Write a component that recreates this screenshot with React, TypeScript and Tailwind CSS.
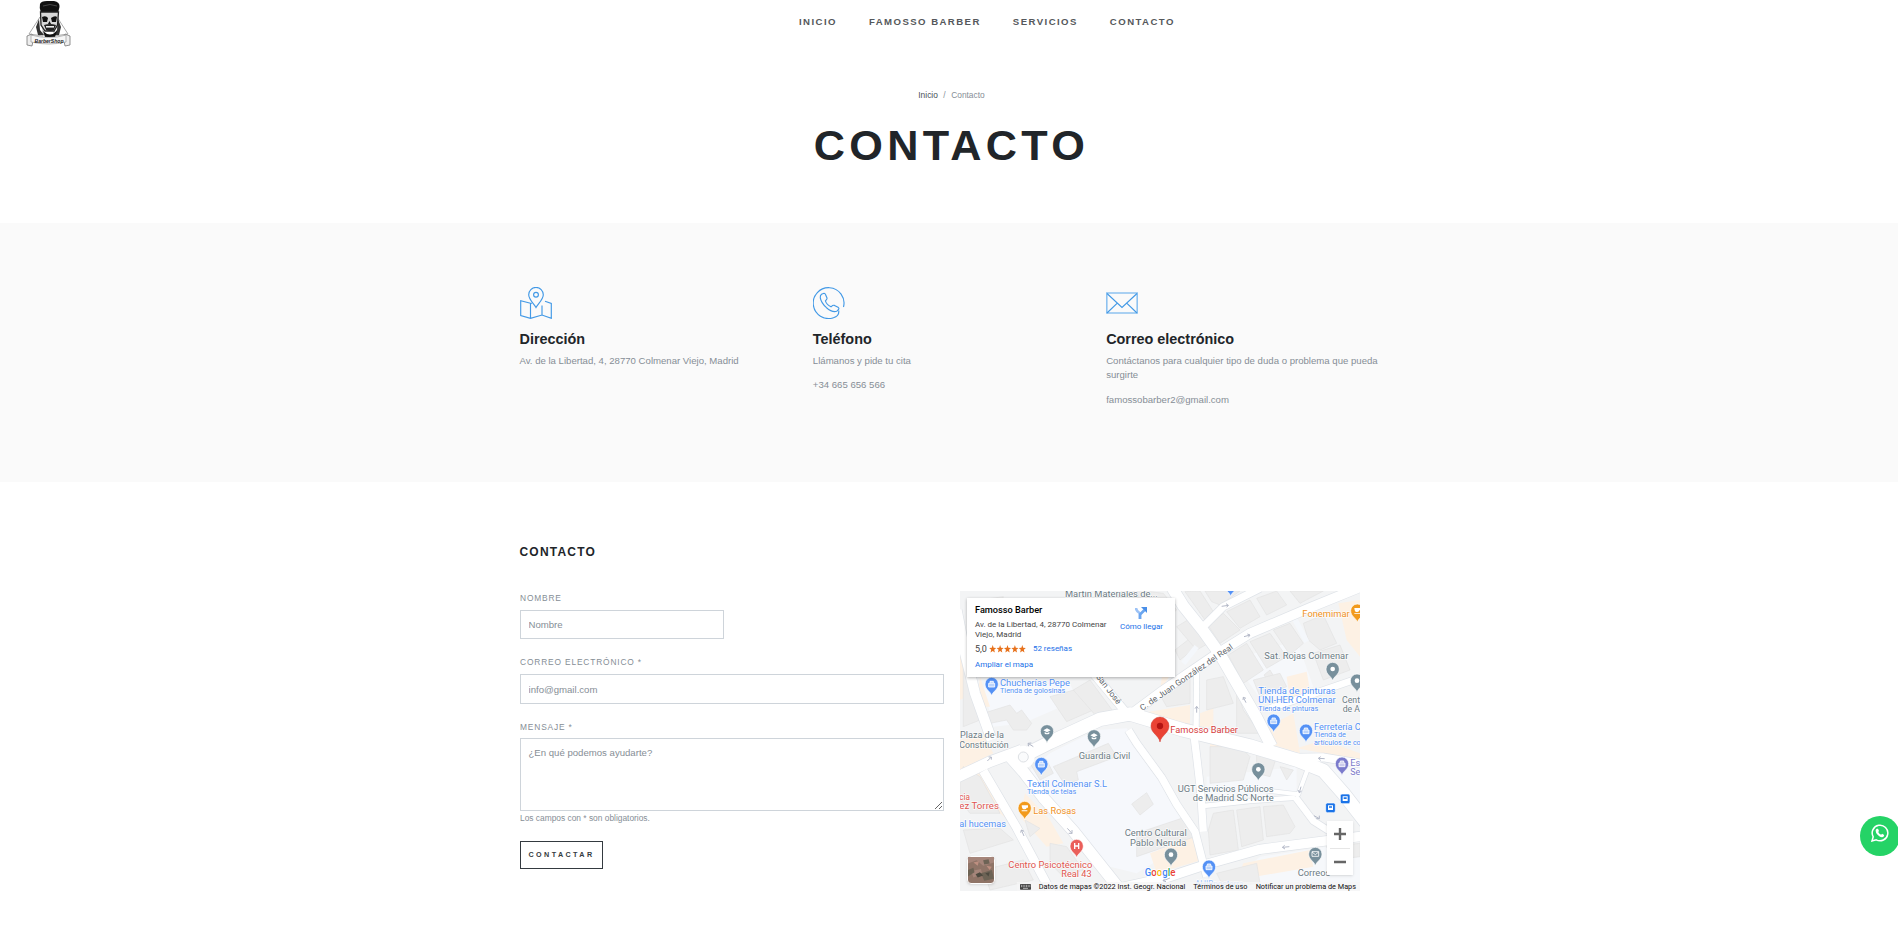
import React from 'react';

const navItems = ['INICIO', 'FAMOSSO BARBER', 'SERVICIOS', 'CONTACTO'];

function Logo() {
  return (
    <svg width="46" height="47" viewBox="0 0 46 47" aria-hidden="true">
      <path d="M3 34 14 17 17 22 17 36ZM42 34 31 17 28 22 28 36Z" fill="#fff" stroke="#aaa" strokeWidth="1" />
      <path d="M13 19 10 27 12 35H33L35 27 32 19 31 30 27 35H18L14 30Z" fill="#333" />
      <path d="M14 4Q15 1 21 1H28Q34 2 33.500 7L32 13H15Q13 8 14 4Z" fill="#111" />
      <path d="M17 6Q24 3 31 6" stroke="#555" strokeWidth=".8" fill="none" />
      <path d="M14.500 12H32.500L31.500 25 28 31H19L15 25Z" fill="#d8d8d8" stroke="#222" strokeWidth="1.3" />
      <path d="M16 17Q20 15 22 18L21 22H17ZM25 18Q29 15 31 17L30 22H26ZM23.5 21 25 24H22Z" fill="#111" />
      <path d="M18 25Q24 23 30 25L28 30Q24 32 20 30Z" fill="#222" />
      <path d="M20 26.8H28" stroke="#eee" strokeWidth="1.6" />
      <path d="M17 31Q24 38 31 31L29 37H19Z" fill="#111" />
      <path d="M1 36 6 34 7 41 6 46 1 45ZM44 36 39 34 38 41 39 46 44 45Z" fill="#eee" stroke="#777" strokeWidth=".8" />
      <path d="M5 35Q23 40 40 35V42Q23 46 5 42Z" fill="#f6f6f6" stroke="#999" strokeWidth=".7" />
      <text x="23" y="42.5" textAnchor="middle" fontSize="6" fontStyle="italic" fontWeight="700" fill="#222" textLength="29" lengthAdjust="spacingAndGlyphs" fontFamily="Liberation Sans, sans-serif">BarberShop</text>
    </svg>
  );
}

const iconProps = { width: 32, height: 32, viewBox: '0 0 32 32', fill: 'none', stroke: '#4299e6', strokeWidth: 1.15 } as const;

function MapIcon() {
  return (
    <svg {...iconProps}>
      <path d="M16 20.5C14 17 8.7 12.3 8.7 7.7A7.3 7.3 0 0 1 23.3 7.7C23.3 12.3 18 17 16 20.5Z" />
      <circle cx="16" cy="7.7" r="2.4" />
      <path d="M12 16.200 10.5 16.2.7 13.8V28.5L10.5 31.3 22 28 31.3 31.3V16.5L25 14.3M10.5 16.2V31.3M22 18.5V28" />
    </svg>
  );
}

function PhoneIcon() {
  return (
    <svg {...iconProps}>
      <path d="M30.5 20A15.4 15.4 0 1 0 20.5 30.7Q26.5 29 25.7 23.5" />
      <path d="M8.5 7.2 11 6.3Q12 6.2 12.5 7.5L14 11Q14.3 12 13.3 12.8L12.4 13.8Q13.5 17.5 18 19.8L19.5 18.6Q20.5 18 21.5 18.4L25 20.2Q26.5 21.2 25.5 22.5L23.7 24.3Q19 25.6 13.5 20.7Q8 15.5 7.3 10.8Q7 8.4 8.5 7.2Z" />
    </svg>
  );
}

function MailIcon() {
  return (
    <svg {...iconProps}>
      <path d="M.8 6H31.2V26H.8Z" stroke="#8ec2f0" strokeWidth="1.6" />
      <path d="M1 6.5 16 20.5 31 6.5M1 26 11.3 16.2M31 26 20.7 16.2" />
    </svg>
  );
}

const GREY = '#78909c';
const BLUE = '#5491f5';

type PinProps = { x: number; y: number; c: string; kind?: 'dot' | 'bag' | 'cap' | 'H' | 'cup' | 'mail' };
function Pin({ x, y, c, kind = 'dot' }: PinProps) {
  return (
    <g transform={`translate(${x} ${y})`}>
      <path d="M0 36C-2 22-20 18-20 0A20 20 0 0 1 20 0C20 18 2 22 0 36Z" fill={c} stroke="#fff" strokeWidth="2" />
      {kind === 'dot' && <circle r="7" fill="#fff" />}
      {kind === 'bag' && <path d="M-9-2H9V9H-9ZM-5-3V-8H5V-3" fill="#fff" fillOpacity=".6" stroke="#fff" strokeWidth="2.5" />}
      {kind === 'cap' && <path d="M-11-3 0-9 11-3 0 3ZM-7 2V7Q0 11 7 7V2L0 6Z" fill="#fff" />}
      {kind === 'H' && <path d="M-6-9V9M6-9V9M-6 0H6" stroke="#fff" strokeWidth="4" />}
      {kind === 'cup' && <path d="M-9-8H10V-1H6Q5 4 0 4H-3Q-8 4-9-8ZM-9 7H8V9.500H-9Z" fill="#fff" />}
      {kind === 'mail' && <path d="M-10-7H10V7H-10ZM-10-6 0 2 10-6" fill="none" stroke="#fff" strokeWidth="2.500" />}
    </g>
  );
}

type LabelProps = { x: number; y: number; w: number; c?: string; s?: number; children: string };
function Label({ x, y, w, c = '#6c7b84', s = 27, children }: LabelProps) {
  return (
    <text x={x} y={y} textLength={w} lengthAdjust="spacingAndGlyphs" fontSize={s} fill={c} stroke="#fff" strokeWidth="4" strokeOpacity=".8" paintOrder="stroke">
      {children}
    </text>
  );
}

const roads: [string, number][] = [
  ['M540 405 630 338 800 222 900 160 1080 83 1240 18', 28],
  ['M655 5 700 78 760 153 810 223 920 413 965 500', 34],
  ['M760 140 820 80 930 25', 22],
  ['M215 530 300 487 450 418 540 402 700 450 900 498 1040 540 1120 572 1180 640 1250 730', 40],
  ['M370 180 430 280 530 400', 24],
  ['M20 90 45 220 75 340 125 480', 30],
  ['M20 592 120 545 215 510', 32],
  ['M100 573 200 743 305 940', 26],
  ['M180 530 220 575 280 653 370 753 515 935', 34],
  ['M535 450 560 490 635 593 680 673 735 755 770 890', 22],
  ['M730 450 740 530 752 633 760 755', 22],
  ['M480 930 650 893 770 853 930 808 1240 768', 28],
  ['M760 678 900 663 1035 653', 14],
  ['M950 632 1045 643 1072 570', 12],
  ['M1035 650 1090 723 1180 780', 20],
  ['M1030 533 1120 532 1240 552', 24],
  ['M740 270 738 470', 16],
  ['M960 385 1080 345 1240 290', 20],
];

const blocks = [
  'M100 400 180 375 200 400 215 390 245 430 230 450 190 450 170 420 120 430Z', 'M300 350 390 325 430 390 350 425Z', 'M370 330 420 300 490 395 440 410Z',
  'M560 30 640 40 680 90 590 150Z', 'M500 30 550 30 580 80 520 110Z',
  'M675 210 720 175 740 200 690 240Z', 'M680 140 730 110 775 190 740 210Z',
  'M705 35 750 33 790 95 765 120Z', 'M765 33 870 33 810 75 785 65Z',
  'M770 130 820 100 870 150 810 190Z', 'M830 95 900 60 930 110 870 145Z', 'M920 55 980 33 1010 75 950 105Z', 'M1020 33 1120 33 1050 70Z',
  'M835 225 890 190 940 270 880 310Z', 'M900 185 960 160 1010 230 950 265Z', 'M970 150 1020 130 1060 190 1020 225Z', 'M1060 130 1120 105 1160 190 1110 210 1075 180Z', 'M1090 220 1170 195 1200 270 1120 300Z',
  'M942 285 960 270 972 290 955 303Z', 'M630 345 720 290 720 370 650 380Z', 'M770 300 820 290 850 370 770 390Z', 'M860 330 880 390 930 460 860 460Z', 'M910 300 990 280 1010 320 930 350Z',
  'M310 560 475 490 500 530 380 575 385 600 345 615Z', 'M545 672 590 638 610 673 570 705Z',
  'M780 500 870 500 900 530 880 600 780 610Z', 'M920 520 980 530 960 590 920 580Z', 'M990 560 1030 570 1010 600Z',
  'M790 700 850 690 865 810 780 825 775 750Z', 'M860 690 930 680 940 780 875 800Z', 'M940 680 1000 675 1035 740 1020 760 950 770Z',
  'M40 560 90 590 150 700 60 700 30 660V590Z', 'M40 750 150 745 190 780 60 820Z', 'M100 870 220 840 250 900 120 930Z',
  'M240 550 290 540 310 580 270 600Z', 'M560 760 710 710 735 770 560 830Z', 'M225 720 270 745 240 770Z', 'M300 790 350 800 400 870 340 890 300 850Z',
  'M800 880 920 850 930 910 820 920Z', 'M1130 800 1230 790V830L1150 840Z', 'M90 60 160 50 140 110 90 120Z', 'M40 230 60 340 90 420 40 440Z',
];

function MapView() {
  return (
    <svg className="block h-[300px] w-[400px]" viewBox="30 33 1200 900" fontFamily="Roboto, sans-serif">
      <rect x="30" y="33" width="1200" height="900" fill="#f3f4f5" />
      <path d="M300 520 440 450 530 445 635 600 740 770 560 880 480 860 360 735 240 570ZM100 320 360 310 380 360 220 430 130 440Z" fill="#f6f8fc" />
      <path d="M770 590 1040 560 1040 640 770 660ZM930 830 1130 800 1240 820V940H800ZM850 240 1040 180 1090 320 940 370ZM1100 560 1240 560 1240 700Z" fill="#f6f8fb" />
      <path d="M30 120 70 340 30 360ZM90 290 120 380 80 380ZM570 400 720 375 720 440 610 430ZM630 333 670 270 640 260ZM1165 70 1230 60V230L1190 180ZM1010 290 1070 275 1080 330 1020 360ZM955 440 1030 400 1050 520 970 495ZM750 400 790 385 790 440 750 440ZM780 490 860 500 860 560 780 580ZM30 480 100 465 130 520 30 570ZM40 590 90 575 200 743 150 700 80 680ZM225 640 300 720 340 790 290 800 210 710ZM600 820 735 770 755 840 620 880ZM880 850 1080 810 1090 860 860 900ZM1040 505 1120 480 1230 520V540Z" fill="#fdf1e4" />
      <g fill="#ededed" stroke="#e2e2e2" strokeWidth="2">{blocks.map((d) => <path key={d} d={d} />)}</g>
      <path d="M1025 100 1070 185M480 33 560 180 610 260M700 250 740 200" stroke="#f4f7fb" strokeWidth="16" fill="none" />
      <g fill="none" strokeLinejoin="round">
        {roads.map(([d, w]) => <path key={d} d={d} stroke="#dfe3e8" strokeWidth={w + 4} />)}
        {roads.map(([d, w]) => <path key={d} d={d} stroke="#fff" strokeWidth={w} />)}
        <circle cx="220" cy="531" r="34" fill="#fff" />
        <circle cx="220" cy="531" r="15" fill="#fafbfc" stroke="#dde0e4" strokeWidth="3" />
        <path d="M815 79 835 76M828 71 835 76 830 82M882 170 900 165M892 162 900 165 895 172M740 398V380M735 386 740 379 745 386M888 368 880 352M879 360 880 352 888 355M112 543 124 531M116 531H124V539M234 490 250 500M236 499 234 490 244 489M214 750 222 768M212 758 214 750 222 754M352 745 366 760M356 760H366V750M1124 536 1106 535M1112 530 1105 535 1112 541M1053 620 1048 638M1044 630 1048 638 1055 633M1092 707 1108 716M1108 707V716H1099M1018 800 998 802M1004 796 997 802 1005 807M660 894 640 902M646 894 639 902 648 905" stroke="#b4b9c8" strokeWidth="3" />
      </g>

      <Label x={345} y={50} w={278}>Martín Materiales de...</Label>
      <Label x={1057} y={112} w={142} c="#f0921e">Fonemimar</Label>
      <Label x={943} y={236} w={252}>Sat. Rojas Colmenar</Label>
      <Label x={925} y={343} w={232} c={BLUE}>Tienda de pinturas</Label>
      <Label x={925} y={370} w={232} c={BLUE}>UNI-HER Colmenar</Label>
      <Label x={925} y={393} w={180} c={BLUE} s={20}>Tienda de pinturas</Label>
      <Label x={1176} y={370} w={54}>Cent</Label>
      <Label x={1178} y={397} w={52}>de A</Label>
      <Label x={1092} y={449} w={140} c={BLUE}>Ferretería C</Label>
      <Label x={1092} y={472} w={96} c={BLUE} s={20}>Tienda de</Label>
      <Label x={1092} y={495} w={140} c={BLUE} s={20}>artículos de co</Label>
      <Label x={150} y={317} w={210} c={BLUE}>Chucherías Pepe</Label>
      <Label x={150} y={340} w={196} c={BLUE} s={20}>Tienda de golosinas</Label>
      <Label x={30} y={475} w={132}>Plaza de la</Label>
      <Label x={28} y={503} w={148}>Constitución</Label>
      <Label x={386} y={537} w={155}>Guardia Civil</Label>
      <Label x={661} y={459} w={203} c="#d63b3b">Famosso Barber</Label>
      <g transform="translate(577 393) rotate(-34.5)"><Label x={0} y={0} w={332} c="#5f676c" s={25}>C. de Juan González del Real</Label></g>
      <g transform="translate(437 291) rotate(52)"><Label x={0} y={0} w={106} c="#5f676c" s={25}>San José</Label></g>
      <Label x={231} y={620} w={240} c={BLUE}>Textil Colmenar S.L</Label>
      <Label x={231} y={642} w={148} c={BLUE} s={20}>Tienda de telas</Label>
      <Label x={28} y={661} w={32} c="#e0554f">cia</Label>
      <Label x={28} y={688} w={119} c="#e0554f">ez Torres</Label>
      <Label x={28} y={741} w={140} c={BLUE}>al hucemas</Label>
      <Label x={250} y={703} w={128} c="#f0921e">Las Rosas</Label>
      <Label x={683} y={635} w={288}>UGT Servicios Públicos</Label>
      <Label x={728} y={663} w={243}>de Madrid SC Norte</Label>
      <Label x={1201} y={557} w={30} c="#7a79c9">Es</Label>
      <Label x={1201} y={585} w={30} c="#7a79c9">Se</Label>
      <Label x={524} y={769} w={186}>Centro Cultural</Label>
      <Label x={540} y={797} w={169}>Pablo Neruda</Label>
      <Label x={175} y={865} w={252} c="#e0554f">Centro Psicotécnico</Label>
      <Label x={334} y={892} w={91} c="#e0554f">Real 43</Label>
      <Label x={1043} y={888} w={98}>Correos</Label>
      <Label x={735} y={922} w={145} c="#9cc2fa">AHIRposterra</Label>

      <Pin x={125} y={312} c={BLUE} kind="bag" />
      <Pin x={291} y={454} c={GREY} kind="cap" />
      <Pin x={432} y={469} c={GREY} kind="cap" />
      <Pin x={1222} y={92} c="#f29a1c" kind="cup" />
      <Pin x={842} y={14} c={BLUE} kind="bag" />
      <Pin x={1148} y={267} c={GREY} />
      <Pin x={1221} y={302} c={GREY} />
      <Pin x={971} y={422} c={BLUE} kind="bag" />
      <Pin x={1068} y={452} c={BLUE} kind="bag" />
      <Pin x={274} y={552} c={BLUE} kind="bag" />
      <Pin x={224} y={684} c="#f29a1c" kind="cup" />
      <Pin x={380} y={798} c="#ea5f5a" kind="H" />
      <Pin x={663} y={824} c={GREY} />
      <Pin x={777} y={860} c={BLUE} kind="bag" />
      <Pin x={925} y={568} c={GREY} />
      <Pin x={1176} y={551} c="#7b7bcc" kind="bag" />
      <Pin x={1096} y={822} c={GREY} kind="mail" />
      <path d="M630 486C627 466 603 460 603 438A27 27 0 0 1 657 438C657 460 633 466 630 486Z" fill="#ea4335" stroke="#cf3a2e" strokeWidth="1.5" />
      <circle cx="630" cy="438" r="9.5" fill="#b31412" />
      <g fill="#1a73e8" stroke="#fff" strokeWidth="2">
        <rect x="1127" y="669" width="29" height="29" rx="5" />
        <rect x="1171" y="642" width="29" height="29" rx="5" />
      </g>
      <path d="M1134 676H1149V690H1134ZM1178 649H1193V663H1178Z" fill="#fff" />
      <path d="M1137 679H1146V683H1137ZM1181 652H1190V657H1181Z" fill="#1a73e8" />

      <text y="887" x="584" fontSize="30" fontWeight="500" textLength="92" lengthAdjust="spacingAndGlyphs" stroke="#fff" strokeWidth="5" paintOrder="stroke">
        <tspan fill="#4285f4">G</tspan><tspan fill="#ea4335">o</tspan><tspan fill="#fbbc05">o</tspan><tspan fill="#4285f4">g</tspan><tspan fill="#34a853">l</tspan><tspan fill="#ea4335">e</tspan>
      </text>

      <rect x="200" y="906" width="1030" height="27" fill="#f5f5f5" fillOpacity=".75" />
      <rect x="210" y="912" width="33" height="17" rx="2" fill="#444" />
      <path d="M213 916H241M213 920H241" stroke="#eee" strokeWidth="2" strokeDasharray="3 2" />
      <path d="M219 925H234" stroke="#eee" strokeWidth="2" />
      <g fontSize="21.5" fill="#111">
        <text x="266" y="926" textLength="440" lengthAdjust="spacingAndGlyphs">Datos de mapas ©2022 Inst. Geogr. Nacional</text>
        <text x="730" y="926" textLength="162" lengthAdjust="spacingAndGlyphs">Términos de uso</text>
        <text x="917" y="926" textLength="301" lengthAdjust="spacingAndGlyphs">Notificar un problema de Maps</text>
      </g>
    </svg>
  );
}

function InfoCard() {
  return (
    <div className="absolute left-[7px] top-[7px] flex h-[79px] w-[208px] justify-between bg-white pl-2 pr-[12px] pt-1.5 font-[Roboto,sans-serif] text-[8px] leading-[10px] text-[#444] shadow-[0_1px_3px_rgba(0,0,0,0.3)]">
      <div className="whitespace-nowrap">
        <p className="text-[9.200px] font-medium leading-3 text-black">Famosso Barber</p>
        <p className="mt-[4px]">Av. de la Libertad, 4, 28770 Colmenar<br />Viejo, Madrid</p>
        <p className="mt-[4px] flex items-center">
          <span className="text-[9px]">5,0</span>
          <svg className="ml-[2px]" width="37" height="8" viewBox="0 0 37 8" fill="#e7711b">
            {[0, 7.4, 14.8, 22.2, 29.6].map((x) => (
              <path key={x} transform={`translate(${x} 0)`} d="M3.7 0 4.6 2.8 7.2 2.9 5.2 4.7 5.9 7.4 3.7 5.9 1.5 7.4 2.2 4.7 .2 2.900 2.8 2.8Z" />
            ))}
          </svg>
          <span className="ml-[7px] text-[#1a6fe8]">52 reseñas</span>
        </p>
        <p className="mt-[6px] text-[#1a6fe8]">Ampliar el mapa</p>
      </div>
      <div className="flex flex-col items-center pt-[3px] text-[#1a6fe8]">
        <svg width="12" height="12" viewBox="0 0 12 12" fill="none" strokeWidth="2.6">
          <path d="M1 1Q1 4 5 6.5V12" stroke="#9cc2f6" />
          <path d="M5 12V7.5L9.5 3" stroke="#6ba6f0" />
          <path d="M6 0H12V6Z" fill="#4a8fe8" />
        </svg>
        <span className="mt-[3px] whitespace-nowrap text-[8px]">Cómo llegar</span>
      </div>
    </div>
  );
}

const fieldLabel = 'block h-[9px] text-[8.4px] leading-[9px] tracking-[0.84px] text-[#868e96]';
const field = 'block border border-[#ced4da] bg-white px-[7.5px] text-[9.6px] leading-[14.4px] text-[#495057] placeholder:text-[#868e96] placeholder:opacity-100';
const cardTitle = 'mt-[11px] text-[14.4px] font-bold leading-[18px] text-[#212529]';

export default function App() {
  return (
    <div className="relative h-[937px] w-full overflow-hidden bg-white font-['Liberation_Sans',Arial,sans-serif] text-[9.6px] leading-[14.4px] text-[#868e96]">
      <header className="flex h-[47px] items-start">
        <div className="ml-[26px] w-[46px]"><Logo /></div>
        <nav className="ml-[727px] mt-[15px] flex gap-8 font-bold tracking-[1.44px] text-[#55585b]">
          {navItems.map((item) => <a key={item} href="#">{item}</a>)}
        </nav>
      </header>

      <section className="flex h-[176px] flex-col items-center pl-[5px]">
        <div className="mt-[42px] flex gap-[5.500px] text-[8.4px] leading-[13px]">
          <a href="#" className="text-[#495057]">Inicio</a><span>/</span><span>Contacto</span>
        </div>
        <h1 className="mt-[17px] text-[43.2px] font-bold leading-[52px] tracking-[4.32px] text-[#212529]">CONTACTO</h1>
      </section>

      <section className="h-[259px] bg-[#fafafa] pt-16">
        <div className="mx-auto grid w-[880px] grid-cols-3">
          <div className="px-[10.5px]">
            <MapIcon />
            <h2 className={cardTitle}>Dirección</h2>
            <p className="mt-[6px]">Av. de la Libertad, 4, 28770 Colmenar Viejo, Madrid</p>
          </div>
          <div className="px-[10.5px]">
            <PhoneIcon />
            <h2 className={cardTitle}>Teléfono</h2>
            <p className="mt-[6px]">Llámanos y pide tu cita</p>
            <p className="mt-[10px]">+34 665 656 566</p>
          </div>
          <div className="px-[10.5px]">
            <MailIcon />
            <h2 className={cardTitle}>Correo electrónico</h2>
            <p className="mt-[6px]">Contáctanos para cualquier tipo de duda o problema que pueda surgirte</p>
            <p className="mt-[10px]">famossobarber2@gmail.com</p>
          </div>
        </div>
      </section>

      <section className="ml-[520px] pt-[61px]">
        <h2 className="-ml-[0.500px] h-[18px] text-[12px] font-bold leading-[18px] tracking-[1.2px] text-[#212529]">CONTACTO</h2>
        <div className="mt-[30px] flex gap-4">
          <form className="w-[424px] pt-[3px]">
            <label className={fieldLabel}>NOMBRE</label>
            <input className={`${field} mt-[7px] h-[29px] w-[204px]`} placeholder="Nombre" />
            <label className={`${fieldLabel} mt-[19px]`}>CORREO ELECTRÓNICO *</label>
            <input className={`${field} mt-[7px] h-[30px] w-full`} placeholder="info@gmail.com" />
            <label className={`${fieldLabel} mt-[19px]`}>MENSAJE *</label>
            <textarea className={`${field} mt-[6px] h-[73px] w-full resize-y pt-[7px]`} placeholder="¿En qué podemos ayudarte?" />
            <p className="mt-[1px] text-[8.4px] leading-[13px]">Los campos con * son obligatorios.</p>
            <button type="button" className="mt-4 flex h-7 w-[83px] items-center border border-[#343a40] pl-[7.500px] text-[7.2px] font-bold tracking-[2.4px] text-[#343a40]">CONTACTAR</button>
          </form>
          <div className="relative h-[300px] w-[400px] overflow-hidden">
            <MapView />
            <InfoCard />
            <div className="absolute bottom-[7px] left-[7px] h-7 w-7 rounded-sm border-[1.500px] border-white bg-[#8f7467] shadow">
              <svg className="h-full w-full" viewBox="0 0 24 24">
                <path d="M0 6 8 3 14 8 24 5V0H0ZM3 13 12 11 13 16 5 19Z" fill="#a5857a" />
                <path d="M0 12 5 10 6 14 0 18ZM12 15 22 12 24 20 15 22ZM14 3 19 2 20 6 15 7Z" fill="#6d6355" />
                <path d="M5 5 10 4 9 8ZM17 8 22 9 20 12Z" fill="#bd8f80" />
                <path d="M7 16 11 14 14 17 9 19ZM16 15 20 14 19 18Z" fill="#4e4a40" />
              </svg>
            </div>
            <div className="absolute right-[7px] top-[230px] h-[54px] w-[26px] bg-white shadow">
              <svg width="26" height="54" viewBox="0 0 26 54" fill="none" stroke="#666" strokeWidth="2.4">
                <path d="M7 13H19M13 7V19M7 41H19" />
                <path d="M3 27.5H23" stroke="#e6e6e6" strokeWidth="1" />
              </svg>
            </div>
          </div>
        </div>
      </section>

      <a href="#" aria-label="WhatsApp" className="absolute left-[1860px] top-[816px] flex h-10 w-10 justify-center rounded-full bg-[#25d366] pt-[8px]">
        <svg width="18" height="18" viewBox="0 0 18 18" fill="none">
          <path d="M1 17 2.2 12.8A7.8 7.8 0 1 1 5.2 15.8Z" stroke="#fff" strokeWidth="1.5" />
          <path d="M5.8 4.8 7 4.7 8 7 7.2 8.1Q8.2 10 10.1 10.8L11.1 9.8 13.2 10.9Q13.3 12.8 11.3 13.2Q9.4 13.5 6.8 11Q4.4 8.5 4.6 6.6Q4.8 5.2 5.8 4.8Z" fill="#fff" />
        </svg>
      </a>
    </div>
  );
}
